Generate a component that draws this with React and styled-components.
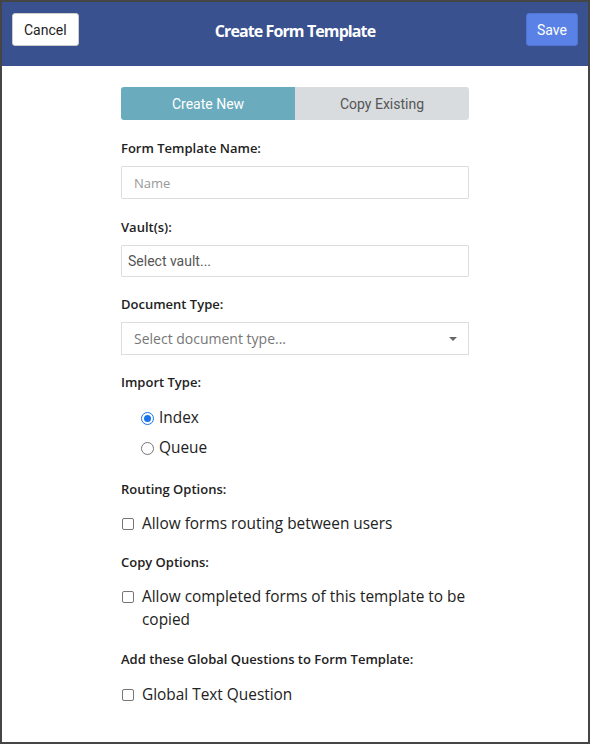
import React, { useState } from "react";
import styled, { createGlobalStyle } from "styled-components";

const Global = createGlobalStyle`
  html, body { margin: 0; padding: 0; background: #fff; }
  * { box-sizing: border-box; }
`;

const Frame = styled.div`
  width: 590px;
  height: 744px;
  border: 2px solid #454545;
  background: #fff;
  overflow: hidden;
  font-family: "Open Sans", sans-serif;
  color: #222;
`;

const Header = styled.header`
  height: 64px;
  background: #3a518f;
  display: flex;
  align-items: center;
  justify-content: space-between;
  padding: 0 10px 0 10px;
  position: relative;
`;

const HeaderButton = styled.button`
  height: 33px;
  padding: 0 ${(p) => (p.$primary ? 10 : 11)}px;
  border-radius: 3px;
  font-family: Roboto, sans-serif;
  font-size: 14px;
  cursor: pointer;
  margin-top: -9px;
  background: ${(p) => (p.$primary ? "#5a82e6" : "#fff")};
  color: ${(p) => (p.$primary ? "#fff" : "#222")};
  border: 1px solid ${(p) => (p.$primary ? "#4f74d2" : "#ccc")};
`;

const Title = styled.h1`
  position: absolute;
  left: 0;
  right: 0;
  top: 18px;
  margin: 0;
  text-align: center;
  font-size: 16px;
  font-weight: 700;
  letter-spacing: -0.9px;
  color: #fff;
  pointer-events: none;
`;

const Body = styled.main`
  width: 348px;
  margin: 21px auto 0;
`;

const Tabs = styled.div`
  display: flex;
  height: 33px;
  border-radius: 3px;
  overflow: hidden;
  margin-bottom: 19px;
`;

const Tab = styled.button`
  flex: 1;
  border: none;
  font-family: Roboto, sans-serif;
  font-size: 14px;
  cursor: pointer;
  background: ${(p) => (p.$active ? "#6aabbd" : "#d8dcdf")};
  color: ${(p) => (p.$active ? "#fff" : "#555")};
`;

const Field = styled.div`
  margin-bottom: ${(p) => p.$mb ?? 18}px;
`;

const Label = styled.div`
  font-size: 13px;
  line-height: 18px;
  font-weight: 600;
  color: #222;
  margin-bottom: ${(p) => p.$mb ?? 9}px;
`;

const Input = styled.input`
  display: block;
  width: 100%;
  height: ${(p) => p.$h ?? 33}px;
  border: 1px solid #ddd;
  border-radius: 1px;
  padding: 0 ${(p) => p.$px ?? 12}px;
  font-family: ${(p) => (p.$roboto ? "Roboto, sans-serif" : '"Open Sans", sans-serif')};
  font-size: ${(p) => (p.$roboto ? 14 : 13)}px;
  outline: none;
  &::placeholder {
    color: ${(p) => (p.$roboto ? "#555" : "#999")};
  }
`;

const Select = styled.div`
  height: 33px;
  border: 1px solid #ddd;
  display: flex;
  align-items: center;
  justify-content: space-between;
  padding: 0 11px 0 12px;
  font-size: 14px;
  color: #777;
`;

const Caret = styled.span`
  width: 0;
  height: 0;
  border-left: 4px solid transparent;
  border-right: 4px solid transparent;
  border-top: 4px solid #666;
`;

const OptionList = styled.div`
  display: flex;
  flex-direction: column;
  gap: ${(p) => p.$gap ?? 6}px;
  padding-left: ${(p) => p.$indent ?? 0}px;
`;

const OptionRow = styled.label`
  display: flex;
  align-items: flex-start;
  gap: ${(p) => p.$gap ?? 8}px;
  font-size: 15.4px;
  line-height: ${(p) => p.$lh ?? 24}px;
  color: #222;
  cursor: pointer;
`;

const RadioDot = styled.span`
  flex: none;
  width: 13px;
  height: 13px;
  margin-top: 5.5px;
  border-radius: 50%;
  border: 1px solid ${(p) => (p.$checked ? "#1a73e8" : "#767676")};
  display: flex;
  align-items: center;
  justify-content: center;
  background: #fff;
  &::after {
    content: "";
    width: 7px;
    height: 7px;
    border-radius: 50%;
    background: ${(p) => (p.$checked ? "#1a73e8" : "transparent")};
  }
`;

const CheckBox = styled.span`
  flex: none;
  width: 12px;
  height: 12px;
  margin-top: ${(p) => p.$mt ?? 6}px;
  margin-left: 1px;
  border: 1px solid #767676;
  border-radius: 2px;
  background: #fff;
`;

export default function App() {
  const [tab, setTab] = useState("new");
  const [imp, setImp] = useState("index");
  return (
    <>
      <Global />
      <Frame>
        <Header>
          <HeaderButton>Cancel</HeaderButton>
          <Title>Create Form Template</Title>
          <HeaderButton $primary>Save</HeaderButton>
        </Header>
        <Body>
          <Tabs>
            <Tab $active={tab === "new"} onClick={() => setTab("new")}>Create New</Tab>
            <Tab $active={tab === "copy"} onClick={() => setTab("copy")}>Copy Existing</Tab>
          </Tabs>

          <Field $mb={19}>
            <Label>Form Template Name:</Label>
            <Input placeholder="Name" />
          </Field>

          <Field>
            <Label>Vault(s):</Label>
            <Input $h={32} $px={6} $roboto placeholder="Select vault..." />
          </Field>

          <Field>
            <Label>Document Type:</Label>
            <Select>
              <span>Select document type...</span>
              <Caret />
            </Select>
          </Field>

          <Field $mb={20}>
            <Label $mb={15}>Import Type:</Label>
            <OptionList $indent={20}>
              <OptionRow $gap={5} onClick={() => setImp("index")}>
                <RadioDot $checked={imp === "index"} />
                Index
              </OptionRow>
              <OptionRow $gap={5} onClick={() => setImp("queue")}>
                <RadioDot $checked={imp === "queue"} />
                Queue
              </OptionRow>
            </OptionList>
          </Field>

          <Field $mb={17}>
            <Label $mb={14}>Routing Options:</Label>
            <OptionRow>
              <CheckBox />
              Allow forms routing between users
            </OptionRow>
          </Field>

          <Field $mb={19}>
            <Label $mb={14}>Copy Options:</Label>
            <OptionRow $lh={23}>
              <CheckBox $mt={6} />
              Allow completed forms of this template to be copied
            </OptionRow>
          </Field>

          <Field>
            <Label $mb={15}>Add these Global Questions to Form Template:</Label>
            <OptionRow>
              <CheckBox />
              Global Text Question
            </OptionRow>
          </Field>
        </Body>
      </Frame>
    </>
  );
}
